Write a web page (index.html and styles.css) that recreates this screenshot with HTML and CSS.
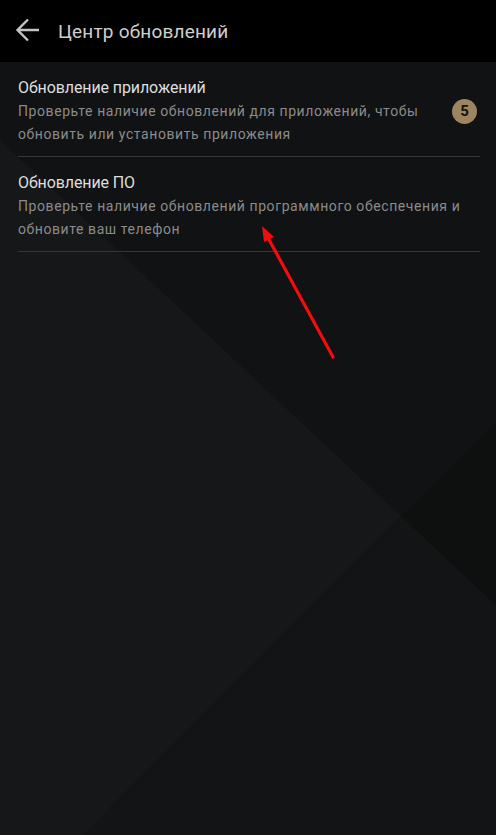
FILE: index.html
```html
<!DOCTYPE html>
<html lang="ru">
  <head>
    <meta charset="UTF-8" />
    <meta name="viewport" content="width=device-width, initial-scale=1.0" />
    <title>Центр обновлений</title>
    <link rel="stylesheet" href="styles.css">
  </head>
  <body>
    <div class="screen">
      <div class="topbar">
        <svg class="back" width="26" height="26" viewBox="0 0 26 26">
          <path d="M24 12H3 M13 1.5L2.5 12L13 22.5" fill="none" stroke="#c4c4c4" stroke-width="2.4" />
        </svg>
        <h1>Центр обновлений</h1>
      </div>

      <div class="content">
        <svg class="backdrop" width="496" height="773" viewBox="0 0 496 773">
          <polygon points="0,78 401,454 83,773 0,773" fill="#161719" />
          <polygon points="401,454 496,543 496,773 83,773" fill="#131416" />
          <polygon points="401,454 496,360 496,543" fill="#0e0f0f" />
        </svg>

        <div class="list">
          <div class="item">
            <div class="item-text">
              <div class="item-title">Обновление приложений</div>
              <div class="item-desc">Проверьте наличие обновлений для приложений, чтобы обновить или установить приложения</div>
            </div>
            <span class="badge">5</span>
          </div>
          <div class="item">
            <div class="item-text">
              <div class="item-title">Обновление ПО</div>
              <div class="item-desc">Проверьте наличие обновлений программного обеспечения и обновите ваш телефон</div>
            </div>
          </div>
        </div>

        <svg class="pointer" width="90" height="150" viewBox="0 0 90 150">
          <line x1="86" y1="135" x2="20" y2="14" stroke="#f20d0d" stroke-width="3.2" stroke-linecap="round" />
          <polygon points="15,4 27,15 17,20" fill="#f20d0d" />
        </svg>
      </div>
    </div>
  </body>
</html>
```

FILE: styles.css
```css
body {
  margin: 0;
  background-color: #000;
  font-family: Roboto, "Noto Sans", sans-serif;
}
.screen {
  width: 496px;
  height: 835px;
  overflow: hidden;
  display: flex;
  flex-direction: column;
}
.topbar {
  height: 62px;
  background-color: #000;
  display: flex;
  align-items: center;
  padding-left: 15px;
  gap: 17px;
  flex-shrink: 0;
}
.back {
  display: block;
}
h1 {
  margin: 0;
  font-size: 19px;
  font-weight: 400;
  color: #cfcfcf;
  letter-spacing: 0.2px;
}
.content {
  position: relative;
  flex: 1;
  background-color: #111213;
}
.backdrop {
  position: absolute;
  left: 0;
  top: 0;
}
.list {
  position: relative;
  padding: 0 16px 0 18px;
}
.item {
  display: flex;
  align-items: center;
  gap: 12px;
  padding: 14px 0 10px;
  border-bottom: 1px solid #353637;
}
.item-text {
  flex: 1;
}
.item-title {
  font-size: 16px;
  line-height: 24px;
  color: #dedede;
  letter-spacing: -0.1px;
}
.item-desc {
  font-size: 14px;
  line-height: 23px;
  color: #8b8b8b;
  letter-spacing: 0.58px;
}
.badge {
  width: 25px;
  height: 25px;
  border-radius: 50%;
  background-color: #9e8560;
  color: #111;
  font-size: 15px;
  font-weight: 700;
  display: flex;
  align-items: center;
  justify-content: center;
  margin-right: 3px;
  flex-shrink: 0;
}
.pointer {
  position: absolute;
  left: 247px;
  top: 160px;
}
```
